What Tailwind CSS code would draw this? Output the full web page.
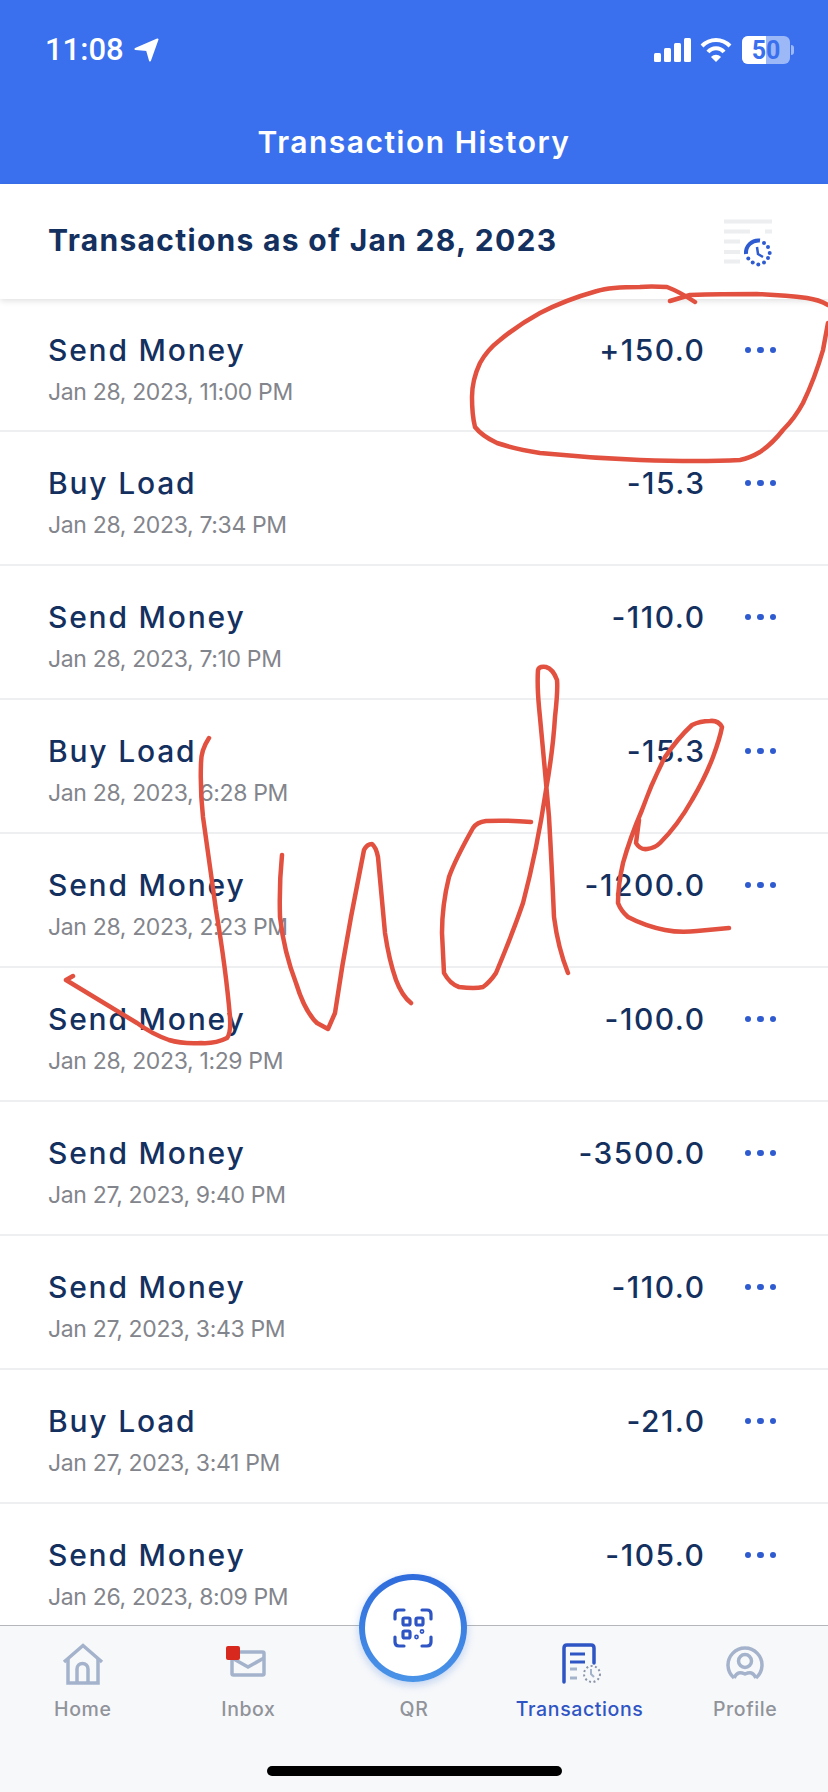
<!DOCTYPE html>
<html lang="en">
<head>
  <meta charset="UTF-8" />
  <title>Transaction History</title>
  <script src="https://cdn.jsdelivr.net/npm/@tailwindcss/browser@4"></script>
</head>
<body class="bg-white">
  <div class="relative w-[828px] h-[1792px] overflow-hidden bg-white font-['Inter',sans-serif]">

    <!-- blue header -->
    <header class="h-[184px] bg-[#3a70ee] text-white flex flex-col">
      <div class="h-[116px] pt-[30px] pl-[45px] pr-[34px] flex items-start justify-between">
        <div class="flex items-center gap-[10px]">
          <span class="text-[31px] leading-[40px] font-medium font-['Roboto',sans-serif]">11:08</span>
          <svg width="25" height="24" viewBox="0 0 25 24"><path d="M1.5 11 23.5 1.5 16 22.5 13 12Z" fill="#fff" stroke="#fff" stroke-width="2" stroke-linejoin="round"/></svg>
        </div>
        <div class="flex items-center gap-[9px] h-[40px]">
          <svg width="37" height="24" viewBox="0 0 37 24" fill="#fff"><rect x="0" y="15" width="7" height="9" rx="1.5"/><rect x="10" y="10" width="7" height="14" rx="1.5"/><rect x="20" y="5" width="7" height="19" rx="1.5"/><rect x="30" y="0" width="7" height="24" rx="1.5"/></svg>
          <svg width="32" height="24" viewBox="0 0 32 24" fill="none" stroke="#fff" stroke-width="4"><path d="M2 8C10 0 22 0 30 8"/><path d="M8 14C12 9 20 9 24 14"/><path d="M16 24 11 19C14 16 18 16 21 19Z" fill="#fff" stroke="none"/></svg>
          <div class="relative ml-[1px] w-[48px] h-[28px] rounded-[6px] bg-white/50 overflow-hidden flex items-center justify-center">
            <div class="absolute left-0 top-0 h-full w-[24px] bg-white"></div>
            <span class="relative text-[25px] leading-none font-bold text-[#3a70ee] font-['Roboto',sans-serif]">50</span>
          </div>
          <div class="-ml-[8px] w-[3px] h-[10px] rounded-r-full bg-white/50"></div>
        </div>
      </div>
      <h1 class="text-center text-[30px] leading-[52px] font-semibold tracking-[1.5px]">Transaction History</h1>
    </header>

    <!-- as-of bar -->
    <div class="relative z-10 h-[115px] bg-white shadow-[0_2px_6px_rgba(0,0,0,0.12)] pl-[48px] pr-[54px] flex items-center justify-between">
      <h2 class="pb-[3px] text-[30px] font-bold text-[#14305f] tracking-[1.3px]">Transactions as of Jan 28, 2023</h2>
      <svg width="50" height="50" viewBox="0 0 50 50">
        <g fill="#eceef0"><rect x="0" y="2.5" width="48" height="4"/><rect x="0" y="12.5" width="26" height="4"/><rect x="41" y="12.5" width="7" height="4"/><rect x="0" y="22.5" width="16" height="4"/><rect x="0" y="33" width="16" height="4"/><rect x="0" y="42.5" width="16" height="4"/></g>
        <path d="M22 37A12.5 12.5 0 0 1 36 23.5" fill="none" stroke="#2f5bd0" stroke-width="4"/>
        <path d="M33 30 34 37 39 40" fill="none" stroke="#2f5bd0" stroke-width="2.5"/>
        <g fill="#2f5bd0"><circle cx="40" cy="26" r="2"/><circle cx="44" cy="30" r="2"/><circle cx="45.7" cy="36" r="2"/><circle cx="44" cy="41" r="2"/><circle cx="40" cy="45.5" r="2"/><circle cx="34.3" cy="47.5" r="2"/><circle cx="28.7" cy="45.5" r="2"/><circle cx="24.3" cy="41.5" r="2"/></g>
      </svg>
    </div>

    <!-- rows -->
    <ul id="rows"></ul>

    <!-- bottom tabs -->
    <nav class="absolute left-0 right-0 top-[1625px] h-[167px] bg-[#f7f8fa] border-t border-[#b4b6b9]">
      <div class="grid grid-cols-5 pt-[17px] text-[19.5px] leading-[24px] font-medium tracking-[0.6px]">
        <div class="flex flex-col items-center text-[#91939a]">
          <svg width="42" height="42" viewBox="0 0 42 42" fill="none" stroke="#a4b3cb" stroke-width="3.5"><path d="M2 19 21 2.5 40 19"/><path d="M6 15V40H36V15"/><path d="M15 40V26A5.5 5.5 0 0 1 26 26V40"/></svg>
          <span class="mt-[12px]">Home</span>
        </div>
        <div class="flex flex-col items-center text-[#91939a]">
          <div class="relative w-[42px] h-[42px]">
            <svg width="42" height="42" viewBox="0 0 42 42" fill="none" stroke="#a4b3cb" stroke-width="3.5"><rect x="5" y="9" width="32" height="23" rx="1.5"/><path d="M5 15 21 24 37 15"/></svg>
            <div class="absolute -left-[1px] top-[3px] w-[14px] h-[14px] rounded-[2px] bg-[#d8291f]"></div>
          </div>
          <span class="mt-[12px]">Inbox</span>
        </div>
        <div class="flex flex-col items-center justify-end h-[78px] text-[#91939a]">
          <span>QR</span>
        </div>
        <div class="flex flex-col items-center text-[#2f55c4]">
          <svg width="42" height="42" viewBox="0 0 42 42" fill="none"><path d="M5 39V5Q5 2 8 2H32Q35 2 35 5V20" stroke="#2f55c4" stroke-width="3.5" stroke-linecap="round"/><path d="M11 11H26M11 19H26" stroke="#2f55c4" stroke-width="3"/><path d="M11 26H18M11 35H18" stroke="#a4b3cb" stroke-width="3"/><circle cx="33" cy="31" r="8" stroke="#8b94a8" stroke-width="2" stroke-dasharray="2 2.5"/><path d="M32 26V31L35 34" stroke="#a4b3cb" stroke-width="2"/></svg>
          <span class="mt-[12px]">Transactions</span>
        </div>
        <div class="flex flex-col items-center text-[#91939a]">
          <svg width="42" height="42" viewBox="0 0 42 42" fill="none" stroke="#a4b3cb" stroke-width="3.5"><path d="M10 35A17 17 0 1 1 32 35"/><circle cx="21" cy="18" r="6.5"/><path d="M10 35C13 29 16 29 21 31C26 29 29 29 32 35"/></svg>
          <span class="mt-[12px]">Profile</span>
        </div>
      </div>
    </nav>

    <!-- QR button sits over the tab bar -->
    <div class="absolute left-[359px] top-[1574px] w-[108px] h-[108px] rounded-full p-[6px] bg-linear-to-b from-[#2f6bdc] to-[#4a94e8] shadow-[0_3px_8px_rgba(60,120,220,0.3)]">
      <div class="w-full h-full rounded-full bg-white flex items-center justify-center">
        <svg width="40" height="40" viewBox="0 0 40 40" fill="none" stroke="#2f55c4" stroke-width="3.2"><path d="M11 2H6Q2 2 2 6V11M29 2H34Q38 2 38 6V11M2 29V34Q2 38 6 38H11M38 29V34Q38 38 34 38H29" stroke-linecap="round"/><rect x="10" y="10" width="7" height="7" rx="1.5"/><rect x="23" y="10" width="7" height="7" rx="1.5"/><rect x="10" y="23" width="7" height="7" rx="1.5"/><circle cx="23.5" cy="29" r="0.8"/><circle cx="29" cy="23.5" r="0.8"/></svg>
      </div>
    </div>

    <div class="absolute left-[267px] top-[1766px] w-[295px] h-[10px] rounded-full bg-black"></div>

    <!-- handwriting on top of the screenshot -->
    <svg class="absolute left-0 top-0 z-20 pointer-events-none" width="828" height="1792" fill="none" stroke="#e2503f" stroke-width="4.5" stroke-linecap="round" stroke-linejoin="round">
      <path d="M695 302Q680 292 667 287Q650 286 640 287Q610 287 597 291Q565 300 540 313Q518 325 500 340Q487 350 480 363Q472 380 472 397Q472 415 475 427Q482 436 497 443Q515 449 540 453Q590 458 640 460Q700 462 740 460Q750 458 760 452Q772 444 783 430Q795 418 803 403Q815 378 823 350L828 323"/>
      <path d="M828 305Q820 300 807 298Q785 295 757 294Q720 294 690 295L670 301"/>
      <path d="M209 738Q201 750 201 763Q200 790 203 817L216 910Q226 970 230 1017Q231 1033 227 1038Q215 1044 201 1043Q182 1044 169 1040Q152 1034 137 1023L66 980 73 976"/>
      <path d="M282 855Q279 885 280 917Q284 952 296 983Q305 1012 317 1023L328 1029 335 1013Q342 965 351 917L364 850Q367 844 372 844Q376 847 378 857L385 933Q389 960 396 980Q402 996 411 1003"/>
      <path d="M531 822Q505 820 486 821Q477 822 473 828Q455 860 449 877Q442 905 442 933L444 973Q450 984 459 987Q475 989 483 987Q490 982 496 973Q512 935 523 903Q537 850 546 790Q553 750 555 717Q558 690 557 680Q553 669 546 667Q539 666 538 670Q537 685 539 707Q545 770 549 817Q552 870 554 917Q558 948 568 973"/>
      <path d="M639 820 636 843Q640 850 647 849Q655 848 660 843Q678 825 692 800Q705 778 713 757Q720 738 722 727Q718 720 710 721Q700 721 692 725Q678 738 665 757Q652 782 642 810Q630 838 623 863Q618 885 618 903Q621 911 628 917Q645 926 665 930Q680 933 697 931L729 928"/>
    </svg>
  </div>

  <script>
    const rows = [
      ['Send Money', 'Jan 28, 2023, 11:00 PM', '+150.0'],
      ['Buy Load', 'Jan 28, 2023, 7:34 PM', '-15.3'],
      ['Send Money', 'Jan 28, 2023, 7:10 PM', '-110.0'],
      ['Buy Load', 'Jan 28, 2023, 6:28 PM', '-15.3'],
      ['Send Money', 'Jan 28, 2023, 2:23 PM', '-1200.0'],
      ['Send Money', 'Jan 28, 2023, 1:29 PM', '-100.0'],
      ['Send Money', 'Jan 27, 2023, 9:40 PM', '-3500.0'],
      ['Send Money', 'Jan 27, 2023, 3:43 PM', '-110.0'],
      ['Buy Load', 'Jan 27, 2023, 3:41 PM', '-21.0'],
      ['Send Money', 'Jan 26, 2023, 8:09 PM', '-105.0'],
    ];

    document.getElementById('rows').innerHTML = rows.map(([name, date, amount]) => `
      <li class="h-[134px] first:h-[133px] border-b-2 border-[#eeeff1] pl-[48px] pr-[52px] pt-[33px] flex justify-between items-start">
        <div>
          <p class="text-[30px] leading-[36px] font-medium tracking-[1.8px] text-[#14305f]">${name}</p>
          <p class="mt-[9px] text-[23px] leading-[30px] tracking-[-0.35px] text-[#83858c]">${date}</p>
        </div>
        <div class="flex items-center h-[36px] gap-[39px]">
          <span class="text-[30px] font-medium tracking-[1.5px] text-[#14305f]">${amount}</span>
          <span class="flex gap-[6px]"><i class="block w-[6.5px] h-[6.5px] rounded-full bg-[#2f5bd0]"></i><i class="block w-[6.5px] h-[6.5px] rounded-full bg-[#2f5bd0]"></i><i class="block w-[6.5px] h-[6.5px] rounded-full bg-[#2f5bd0]"></i></span>
        </div>
      </li>`).join('');
  </script>
</body>
</html>
